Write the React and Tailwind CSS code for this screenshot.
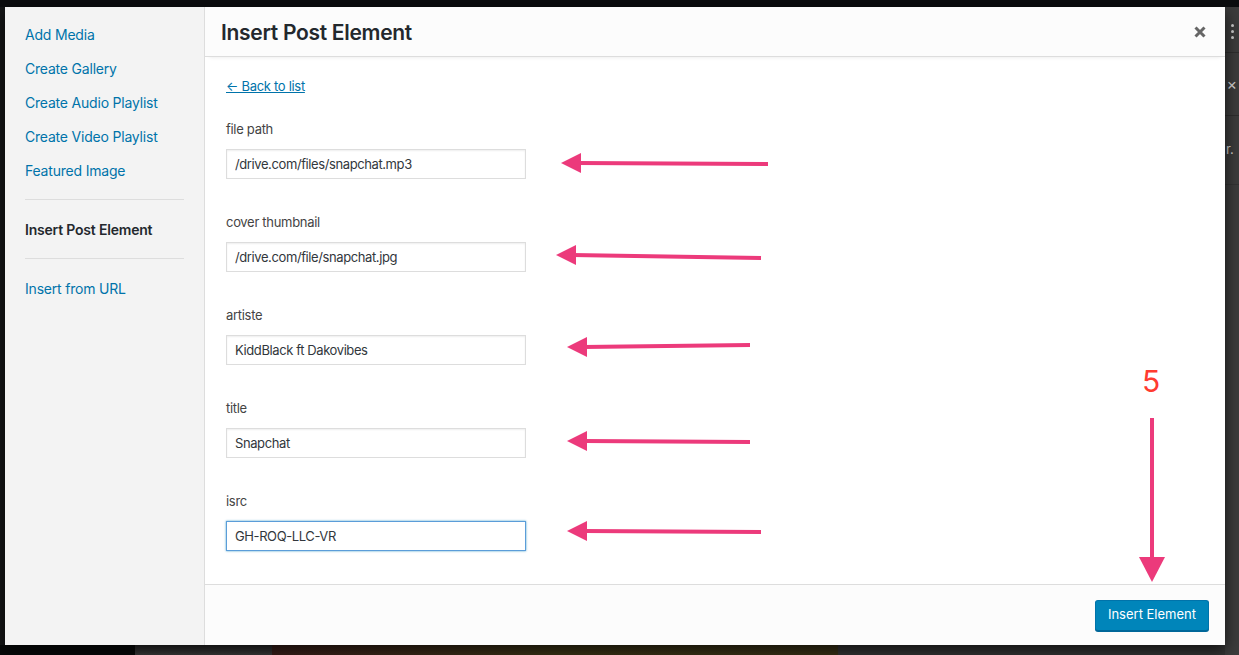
import { useState } from 'react';

const menu = [
  { label: 'Add Media' },
  { label: 'Create Gallery' },
  { label: 'Create Audio Playlist' },
  { label: 'Create Video Playlist' },
  { label: 'Featured Image' },
];

const fields = [
  { name: 'file path', value: '/drive.com/files/snapchat.mp3' },
  { name: 'cover thumbnail', value: '/drive.com/file/snapchat.jpg' },
  { name: 'artiste', value: 'KiddBlack ft Dakovibes' },
  { name: 'title', value: 'Snapchat' },
  { name: 'isrc', value: 'GH-ROQ-LLC-VR', focused: true },
];

// annotation arrows drawn over the screenshot: [tailX, tailY, tipX, tipY]
const arrows = [
  [768, 164, 561, 163],
  [761, 258, 556, 255],
  [750, 345, 567, 347],
  [750, 442, 567, 441],
  [761, 532, 567, 531],
];

const Background = () => (
  <div className="flex h-[655px] w-full flex-col bg-[#0c0d0f]">
    <div className="h-[7px] shrink-0 bg-[#0c0d0f]" />
    <div className="flex flex-1">
      <div className="flex flex-1 flex-col">
        <div className="flex-1 bg-[#161718]" />
        <div className="flex h-[10px]">
          <div className="w-[135px] bg-[#070909]" />
          <div className="w-[137px] bg-gradient-to-b from-[#2a2a2a] to-[#3a3a3a]" />
          <div className="w-[566px] bg-gradient-to-r from-[#3a1f1a] via-[#3b3416] to-[#3a3217]" />
          <div className="flex-1 bg-[#343434]" />
        </div>
      </div>
      <div className="flex w-[14px] flex-col bg-[#3c3c3c] font-['Inter',sans-serif] text-[#d5d5d5]">
        <div className="flex h-[45px] flex-col items-end justify-center gap-[3px] pr-[5px] pt-[4px]">
          <span className="h-[3px] w-[3px] rounded-full bg-[#cfcfcf]" />
          <span className="h-[3px] w-[3px] rounded-full bg-[#cfcfcf]" />
          <span className="h-[3px] w-[3px] rounded-full bg-[#cfcfcf]" />
        </div>
        <div className="h-px bg-[#2e2e2e]" />
        <div className="flex h-[62px] items-center justify-end pr-[2px] text-[16px] leading-none">×</div>
        <div className="h-px bg-[#2e2e2e]" />
        <div className="flex h-[68px] items-center justify-start overflow-hidden pl-px text-[13px]">r.</div>
        <div className="h-px bg-[#333]" />
        <div className="flex-1" />
      </div>
    </div>
  </div>
);

const Annotations = () => (
  <svg
    className="pointer-events-none absolute left-0 top-0"
    width="1239"
    height="655"
    viewBox="0 0 1239 655"
  >
    {arrows.map(([x1, y1, x2, y2], i) => (
      <g key={i}>
        <line x1={x1} y1={y1} x2={x2 + 16} y2={y2} stroke="#ec3a7b" strokeWidth="4" />
        <polygon points={`${x2},${y2} ${x2 + 20},${y2 - 10} ${x2 + 20},${y2 + 10}`} fill="#ec3a7b" />
      </g>
    ))}
    <line x1="1152" y1="418" x2="1152" y2="562" stroke="#ec3a7b" strokeWidth="4" />
    <polygon points="1152,582 1139,557 1165,557" fill="#ec3a7b" />
  </svg>
);

export default function App() {
  const [values, setValues] = useState(fields.map((f) => f.value));

  return (
    <div className="relative h-[655px] w-full overflow-hidden font-['Inter',sans-serif]">
      <Background />

      {/* media modal */}
      <div className="absolute left-[5px] top-[7px] flex h-[638px] w-[1220px] shadow-[0_5px_15px_rgba(0,0,0,0.7)]">
        <div className="flex w-[200px] shrink-0 flex-col border-r border-[#dddddd] bg-[#f3f3f3] pt-[10px] tracking-[-0.2px]">
          {menu.map((item) => (
            <a key={item.label} className="flex h-[34px] items-center px-[20px] text-[14px] text-[#0073aa]">
              {item.label}
            </a>
          ))}
          <div className="mx-[20px] my-[12px] h-px bg-[#dddddd]" />
          <a className="flex h-[34px] items-center px-[20px] text-[14px] font-semibold text-[#23282d]">
            Insert Post Element
          </a>
          <div className="mx-[20px] my-[12px] h-px bg-[#dddddd]" />
          <a className="flex h-[34px] items-center px-[20px] text-[14px] text-[#0073aa]">
            Insert from URL
          </a>
        </div>

        <div className="flex flex-1 flex-col bg-white">
          <div className="flex h-[50px] shrink-0 items-center justify-between border-b border-[#dddddd] bg-[#fcfcfc] pl-[16px] shadow-[0_4px_4px_-4px_rgba(0,0,0,0.1)]">
            <h1 className="pt-[2px] text-[21px] font-semibold tracking-[-0.3px] text-[#23282d]">Insert Post Element</h1>
            <button className="flex h-[50px] w-[50px] items-center justify-center text-[#666666]">
              <svg width="12" height="12" viewBox="0 0 12 12">
                <path d="M1.5 1.5 L10.5 10.5 M10.5 1.5 L1.5 10.5" stroke="currentColor" strokeWidth="3" />
              </svg>
            </button>
          </div>

          <div className="flex flex-1 flex-col pl-[21px] pt-[19px] tracking-[-0.3px]">
            <a className="self-start text-[13px] leading-[20px] text-[#0073aa] underline">← Back to list</a>
            {fields.map((f, i) => (
              <div key={f.name} className={i === 0 ? 'mt-[23px]' : 'mt-[33px]'}>
                <label className="block text-[13px] leading-[20px] text-[#444444]">{f.name}</label>
                <input
                  value={values[i]}
                  onChange={(e) => setValues(values.map((v, j) => (j === i ? e.target.value : v)))}
                  className={`mt-[10px] block h-[30px] w-[300px] border bg-white px-[8px] text-[13px] tracking-[-0.4px] text-[#32373c] outline-none ${
                    f.focused
                      ? 'border-[#5b9dd9] shadow-[0_0_2px_rgba(30,140,190,0.8)]'
                      : 'border-[#dddddd] shadow-[inset_0_1px_2px_rgba(0,0,0,0.07)]'
                  }`}
                />
              </div>
            ))}
          </div>

          <div className="flex h-[61px] shrink-0 items-center justify-end border-t border-[#dddddd] bg-[#fcfcfc] pr-[16px]">
            <button className="h-[31px] rounded-[3px] border border-[#0073aa] border-b-[#006799] bg-[#0085ba] px-[12px] text-[13px] text-white shadow-[0_1px_0_#006799]">
              Insert Element
            </button>
          </div>
        </div>
      </div>

      <div className="absolute left-[1136px] top-[366px] w-[30px] text-center text-[30px] leading-none text-[#ff3b30]">5</div>
      <Annotations />
    </div>
  );
}
